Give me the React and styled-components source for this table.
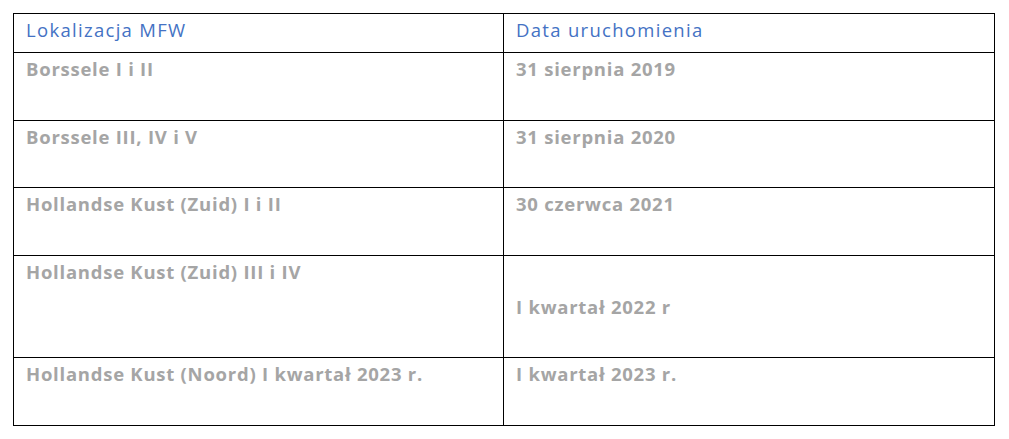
import React from 'react';
import styled, { createGlobalStyle } from 'styled-components';

const GlobalStyle = createGlobalStyle`
    html, body {
        margin: 0;
        padding: 0;
        background: #ffffff;
    }
`;

const Page = styled.div`
    padding: 13px 0 0 13px;
    font-family: "Open Sans", Lato, sans-serif;
`;

const Table = styled.table`
    width: 982px;
    border-collapse: collapse;
    table-layout: fixed;
`;

const Cell = styled.td`
    border: 1px solid #000000;
    padding: 0 12px;
    height: ${p => p.$h}px;
    vertical-align: ${p => (p.$middle ? 'middle' : 'top')};
    font-size: 18.5px;
    letter-spacing: 0.75px;
    line-height: 1.25;
    box-sizing: border-box;
`;

const HeadCell = styled(Cell).attrs({ as: 'th' })`
    text-align: left;
    font-weight: 400;
    color: #4472c4;
    letter-spacing: 1.3px;
    padding-top: 4px;
`;

const Value = styled.span`
    display: block;
    font-weight: 700;
    color: #a5a5a5;
    padding-top: ${p => (p.$middle ? 0 : 4)}px;
`;

const rows = [
    { place: 'Borssele I i II', date: '31 sierpnia 2019', h: 68 },
    { place: 'Borssele III, IV i V', date: '31 sierpnia 2020', h: 67 },
    { place: 'Hollandse Kust (Zuid) I i II', date: '30 czerwca 2021', h: 68 },
    { place: 'Hollandse Kust (Zuid) III i IV', date: 'I kwartał 2022 r', h: 102, middle: true },
    { place: 'Hollandse Kust (Noord) I kwartał 2023 r.', date: 'I kwartał 2023 r.', h: 68 },
];

function App() {
    return (
        <Page>
            <GlobalStyle />
            <Table>
                <colgroup>
                    <col style={{ width: 490 }} />
                    <col />
                </colgroup>
                <thead>
                    <tr>
                        <HeadCell $h={39}>Lokalizacja MFW</HeadCell>
                        <HeadCell $h={39}>Data uruchomienia</HeadCell>
                    </tr>
                </thead>
                <tbody>
                    {rows.map((row, index) => (
                        <tr key={index}>
                            <Cell $h={row.h}>
                                <Value>{row.place}</Value>
                            </Cell>
                            <Cell $h={row.h} $middle={row.middle}>
                                <Value $middle={row.middle}>{row.date}</Value>
                            </Cell>
                        </tr>
                    ))}
                </tbody>
            </Table>
        </Page>
    );
}

export default App;
